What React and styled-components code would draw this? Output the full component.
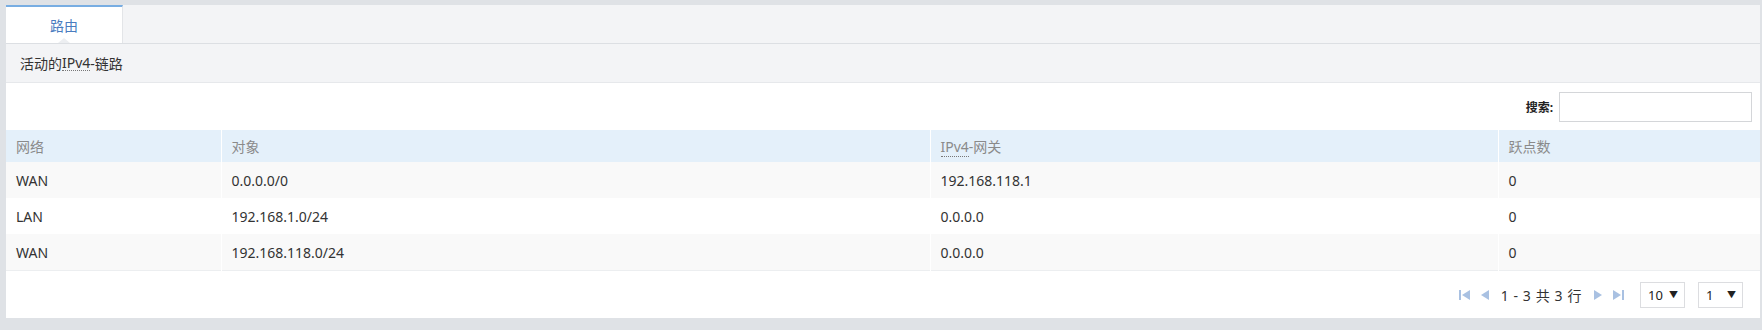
import React from 'react';
import styled, { createGlobalStyle } from 'styled-components';

const GlobalStyle = createGlobalStyle`
  html, body {
    margin: 0;
    padding: 0;
    background: #dfe2e6;
    font-family: "Noto Sans", "Noto Sans CJK SC", sans-serif;
    font-size: 14px;
    color: #333;
  }
`;

const columns = [
  { key: 'net', title: '网络', width: 215 },
  { key: 'target', title: '对象', width: 709 },
  { key: 'gateway', title: 'IPv4-网关', width: 568, abbr: true },
  { key: 'hops', title: '跃点数' }
];

const rows = [
  { net: 'WAN', target: '0.0.0.0/0', gateway: '192.168.118.1', hops: '0' },
  { net: 'LAN', target: '192.168.1.0/24', gateway: '0.0.0.0', hops: '0' },
  { net: 'WAN', target: '192.168.118.0/24', gateway: '0.0.0.0', hops: '0' }
];

const Page = styled.div`
    padding: 5px 2px 13px 6px;
  `,
  Panel = styled.div`
    background: #fff;
    display: flex;
    flex-direction: column;
  `,
  TabBar = styled.div`
    height: 38px;
    display: flex;
    background: #f3f4f6;
    border-bottom: 1px solid #dcdfe3;
  `,
  Tab = styled.div`
    position: relative;
    width: 116px;
    display: flex;
    align-items: center;
    justify-content: center;
    background: #fff;
    border-top: 2px solid #78ade2;
    border-right: 1px solid #e3e5e8;
    color: #4a7cc0;
    font-size: 14px;
    &::after {
      content: '';
      position: absolute;
      left: 50%;
      bottom: 0;
      margin-left: -6px;
      border-left: 6px solid transparent;
      border-right: 6px solid transparent;
      border-bottom: 5px solid #eceef1;
    }
  `,
  SectionHeader = styled.div`
    height: 38px;
    display: flex;
    align-items: center;
    padding-left: 14px;
    background: #f3f4f6;
    border-bottom: 1px solid #e6e8eb;
    color: #333;
  `,
  Abbr = styled.abbr`
    text-decoration: none;
    border-bottom: 1px dotted #777;
    line-height: 15px;
  `,
  Toolbar = styled.div`
    height: 47px;
    display: flex;
    align-items: center;
    justify-content: flex-end;
    gap: 6px;
    padding-right: 8px;
  `,
  SearchLabel = styled.label`
    font-size: 12px;
    font-weight: bold;
    color: #222;
  `,
  SearchInput = styled.input`
    width: 191px;
    height: 28px;
    padding: 0;
    border: 1px solid #d4d6d9;
    outline: none;
  `,
  Table = styled.table`
    width: 100%;
    border-collapse: collapse;
    table-layout: fixed;
    border-bottom: 1px solid #eceef0;
  `,
  Col = styled.col`
    width: ${props => (props.$width ? `${props.$width}px` : 'auto')};
  `,
  HeadCell = styled.th`
    height: 32px;
    padding: 0 0 0 10px;
    text-align: left;
    font-weight: normal;
    color: #8a8a8a;
    background: #e4f0fa;
    border-left: 1px solid #fff;
    &:first-child {
      border-left: none;
    }
  `,
  Row = styled.tr`
    background: ${props => (props.$striped ? '#f9f9f9' : '#fff')};
  `,
  Cell = styled.td`
    height: 36px;
    padding: 0 0 0 10px;
    color: #333;
    border-left: 1px solid #fff;
    &:first-child {
      border-left: none;
    }
  `,
  Footer = styled.div`
    height: 47px;
    display: flex;
    align-items: center;
    justify-content: flex-end;
    padding-right: 17px;
  `,
  Pager = styled.div`
    display: flex;
    align-items: center;
    gap: 9px;
    margin-right: 16px;
  `,
  PagerText = styled.span`
    font-size: 14px;
    letter-spacing: 0.6px;
    color: #333;
    margin: 0 2px;
  `,
  Select = styled.div`
    width: 45px;
    height: 26px;
    box-sizing: border-box;
    border: 1px solid #dcdde0;
    display: flex;
    align-items: center;
    justify-content: space-between;
    padding: 0 6px 0 7px;
    margin-left: ${props => props.$gap || 0}px;
    font-size: 13px;
    color: #222;
  `,
  Caret = styled.span`
    font-size: 9px;
  `;

const PagerIcon = ({ dir, bar }) => (
  <svg width="11" height="12" viewBox="0 0 11 12">
    {dir === 'left' ? (
      <>
        {bar && <rect x="0" y="1" width="2" height="10" fill="#a9c1e2" />}
        <polygon points={bar ? '11,1 3,6 11,11' : '10,1 2,6 10,11'} fill="#a9c1e2" />
      </>
    ) : (
      <>
        <polygon points={bar ? '0,1 8,6 0,11' : '1,1 9,6 1,11'} fill="#a9c1e2" />
        {bar && <rect x="9" y="1" width="2" height="10" fill="#a9c1e2" />}
      </>
    )}
  </svg>
);

const Title = ({ column }) =>
  column.abbr ? (
    <>
      <Abbr title="Internet Protocol Version 4">IPv4</Abbr>
      {column.title.replace('IPv4', '')}
    </>
  ) : (
    column.title
  );

export default function App() {
  return (
    <Page>
      <GlobalStyle />
      <Panel>
        <TabBar>
          <Tab>路由</Tab>
        </TabBar>
        <SectionHeader>
          活动的<Abbr title="Internet Protocol Version 4">IPv4</Abbr>-链路
        </SectionHeader>
        <Toolbar>
          <SearchLabel>搜索:</SearchLabel>
          <SearchInput type="text" />
        </Toolbar>
        <Table>
          <colgroup>
            {columns.map(c => (
              <Col key={c.key} $width={c.width} />
            ))}
          </colgroup>
          <thead>
            <tr>
              {columns.map(c => (
                <HeadCell key={c.key}>
                  <Title column={c} />
                </HeadCell>
              ))}
            </tr>
          </thead>
          <tbody>
            {rows.map((r, i) => (
              <Row key={i} $striped={i % 2 === 0}>
                {columns.map(c => (
                  <Cell key={c.key}>{r[c.key]}</Cell>
                ))}
              </Row>
            ))}
          </tbody>
        </Table>
        <Footer>
          <Pager>
            <PagerIcon dir="left" bar />
            <PagerIcon dir="left" />
            <PagerText>1 - 3 共 3 行</PagerText>
            <PagerIcon dir="right" />
            <PagerIcon dir="right" bar />
          </Pager>
          <Select>
            <span>10</span>
            <Caret>▼</Caret>
          </Select>
          <Select $gap={13}>
            <span>1</span>
            <Caret>▼</Caret>
          </Select>
        </Footer>
      </Panel>
    </Page>
  );
}
